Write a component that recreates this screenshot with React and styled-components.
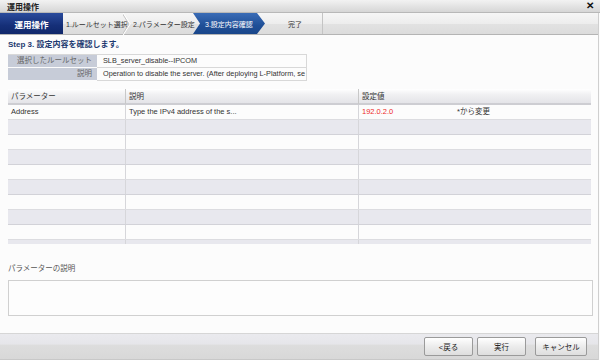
import React from "react";
import styled, { createGlobalStyle } from "styled-components";

const Global = createGlobalStyle`
  html, body { margin: 0; padding: 0; background: #fcfcfc; }
  body { font-family: "Liberation Sans", "Noto Sans CJK JP", sans-serif; }
  * { box-sizing: border-box; }
`;

const Dialog = styled.div`
  width: 600px;
  height: 360px;
  display: flex;
  flex-direction: column;
  background: #fcfcfc;
  font-size: 8px;
  color: #333;
  overflow: hidden;
`;

const TitleBar = styled.div`
  height: 13px;
  flex: none;
  display: flex;
  align-items: center;
  justify-content: space-between;
  padding: 0 6px 0 7px;
  background: linear-gradient(#f2f2f2, #d6d6d6);
  border-bottom: 1px solid #b8b8b8;
  font-weight: bold;
  font-size: 8px;
  color: #222;
`;

const Close = styled.span`
  font-size: 10px;
  font-weight: bold;
  color: #111;
  line-height: 1;
`;

const Body = styled.div`
  flex: 1;
  display: flex;
  flex-direction: column;
  border-right: 1px solid #cfcfcf;
  width: 599px;
`;

const StepBar = styled.div`
  height: 22px;
  flex: none;
  display: flex;
  align-items: stretch;
  background: linear-gradient(#f6f6f6 0%, #ededed 50%, #e2e2e2 51%, #dcdcdc 100%);
  border-bottom: 1px solid #b4b4b4;
`;

const ModeTab = styled.div`
  width: 63px;
  display: flex;
  align-items: center;
  justify-content: center;
  background: linear-gradient(#2a4b9c, #152f78 60%, #0f276a);
  color: #fff;
  font-weight: bold;
  font-size: 8.5px;
  white-space: nowrap;
`;

const Step = styled.div`
  width: ${(p) => p.$w}px;
  position: relative;
  display: flex;
  align-items: center;
  white-space: nowrap;
  padding-left: ${(p) => p.$pl || 3}px;
  font-size: 7px;
  color: ${(p) => (p.$active ? "#fff" : "#333")};
  background: ${(p) =>
    p.$active ? "linear-gradient(#3a6cb6, #1f4f97 60%, #1a468a)" : "transparent"};
  clip-path: ${(p) =>
    p.$active
      ? "polygon(0 0, calc(100% - 8px) 0, 100% 50%, calc(100% - 8px) 100%, 0 100%, 7px 50%)"
      : "none"};
  border-right: ${(p) => (p.$sep ? "1px solid #c4c4c4" : "none")};
  justify-content: ${(p) => (p.$center ? "center" : "flex-start")};
`;

const Chevron = styled.svg`
  position: absolute;
  right: -1px;
  top: 0;
  width: 8px;
  height: 22px;
`;

const Filler = styled.div`
  flex: 1;
`;

const Content = styled.div`
  flex: 1;
  display: flex;
  flex-direction: column;
  padding: 0 6px 0 8px;
`;

const Heading = styled.div`
  margin-top: 4px;
  height: 11px;
  line-height: 11px;
  font-weight: bold;
  font-size: 8px;
  color: #1d3a70;
`;

const InfoTable = styled.div`
  margin-top: 4px;
  width: 299px;
  display: grid;
  grid-template-columns: 89px 1fr;
  grid-auto-rows: 13px;
  border-top: 1px solid #d8d8d8;
  border-right: 1px solid #d8d8d8;
`;

const InfoLabel = styled.div`
  background: #c7ccd8;
  color: #666;
  text-align: right;
  padding-right: 5px;
  line-height: 12px;
  font-size: 7.5px;
  border-bottom: 1px solid #fcfcfc;
`;

const InfoValue = styled.div`
  padding-left: 6px;
  line-height: 12px;
  font-size: 7.3px;
  white-space: nowrap;
  overflow: hidden;
  color: #333;
  border-bottom: 1px solid #d8d8d8;
`;

const Grid = styled.div`
  margin-top: 8px;
  width: 583px;
`;

const cols = "117px 233px 233px";

const HeadRow = styled.div`
  display: grid;
  grid-template-columns: ${cols};
  height: 16px;
  background: linear-gradient(#ffffff 0%, #f0f0f2 40%, #e4e4e8 100%);
  border-bottom: 2px solid #cdcdd2;
`;

const HeadCell = styled.div`
  padding-left: 3px;
  line-height: 15px;
  font-size: 7.5px;
  color: #333;
  border-left: ${(p) => (p.$first ? "none" : "1px solid #c8c8c8")};
`;

const BodyArea = styled.div`
  height: 139px;
  overflow: hidden;
`;

const Row = styled.div`
  display: grid;
  grid-template-columns: ${cols};
  height: 15px;
  background: ${(p) => (p.$alt ? "#e8e8ee" : "#fcfcfc")};
  border-bottom: 1px solid ${(p) => (p.$alt ? "#d2d2d8" : "#dcdce0")};
`;

const Cell = styled.div`
  padding-left: 3px;
  line-height: 14px;
  font-size: 7.5px;
  white-space: nowrap;
  overflow: hidden;
  display: flex;
  border-left: ${(p) => (p.$first ? "none" : "1px solid #d6d6da")};
`;

const Value = styled.span`
  width: 95px;
  color: #ee2a2a;
`;

const Note = styled.span`
  color: #333;
`;

const DescLabel = styled.div`
  margin-top: 20px;
  height: 10px;
  line-height: 10px;
  font-size: 7.5px;
  color: #555;
`;

const DescBox = styled.div`
  margin-top: 6px;
  width: 585px;
  height: 36px;
  border: 1px solid #d0d0d0;
  background: #fdfdfd;
`;

const Footer = styled.div`
  margin-top: auto;
  height: 27px;
  flex: none;
  display: flex;
  align-items: center;
  justify-content: flex-end;
  padding-right: 11px;
  background: linear-gradient(#eaeaee 0%, #e6e6ea 40%, #dddddd 45%, #d8d8d8 100%);
  border-top: 1px solid #d6d6d6;
  border-bottom: 1px solid #c8c8c8;
`;

const Button = styled.button`
  width: ${(p) => p.$w}px;
  height: 19px;
  margin-left: ${(p) => p.$ml}px;
  padding: 0;
  border: 1px solid #9a9a9a;
  border-radius: 2px;
  background: linear-gradient(#ffffff, #ececec 50%, #dedede);
  font-family: inherit;
  font-size: 7.5px;
  color: #222;
`;

const ChevronSvg = () => (
  <Chevron viewBox="0 0 8 22">
    <polyline points="0,0 7,11 0,22" fill="none" stroke="#ffffff" strokeWidth="1.2" />
    <polyline points="-1,0 6,11 -1,22" fill="none" stroke="#c4c4c4" strokeWidth="1" />
  </Chevron>
);

const rows = Array.from({ length: 10 }, (_, i) => i);

export default function App() {
  return (
    <Dialog>
      <Global />
      <TitleBar>
        <span>運用操作</span>
        <Close>✕</Close>
      </TitleBar>
      <Body>
        <StepBar>
          <ModeTab>運用操作</ModeTab>
          <Step $w={67}>
            1.ルールセット選択
            <ChevronSvg />
          </Step>
          <Step $w={63}>2.パラメーター設定</Step>
          <Step $w={72} $active $pl={12}>
            3.設定内容確認
          </Step>
          <Step $w={58} $sep $center>
            完了
          </Step>
          <Filler />
        </StepBar>
        <Content>
          <Heading>Step 3. 設定内容を確認します。</Heading>
          <InfoTable>
            <InfoLabel>選択したルールセット</InfoLabel>
            <InfoValue>SLB_server_disable--IPCOM</InfoValue>
            <InfoLabel>説明</InfoLabel>
            <InfoValue>Operation to disable the server. (After deploying L-Platform, se</InfoValue>
          </InfoTable>
          <Grid>
            <HeadRow>
              <HeadCell $first>パラメーター</HeadCell>
              <HeadCell>説明</HeadCell>
              <HeadCell>設定値</HeadCell>
            </HeadRow>
            <BodyArea>
              {rows.map((i) => (
                <Row key={i} $alt={i % 2 === 1}>
                  <Cell $first>{i === 0 ? "Address" : ""}</Cell>
                  <Cell>{i === 0 ? "Type the IPv4 address of the s..." : ""}</Cell>
                  <Cell>
                    {i === 0 && (
                      <>
                        <Value>192.0.2.0</Value>
                        <Note>*から変更</Note>
                      </>
                    )}
                  </Cell>
                </Row>
              ))}
            </BodyArea>
          </Grid>
          <DescLabel>パラメーターの説明</DescLabel>
          <DescBox />
        </Content>
        <Footer>
          <Button $w={49} $ml={0}>&lt;戻る</Button>
          <Button $w={49} $ml={4}>実行</Button>
          <Button $w={52} $ml={9}>キャンセル</Button>
        </Footer>
      </Body>
    </Dialog>
  );
}
